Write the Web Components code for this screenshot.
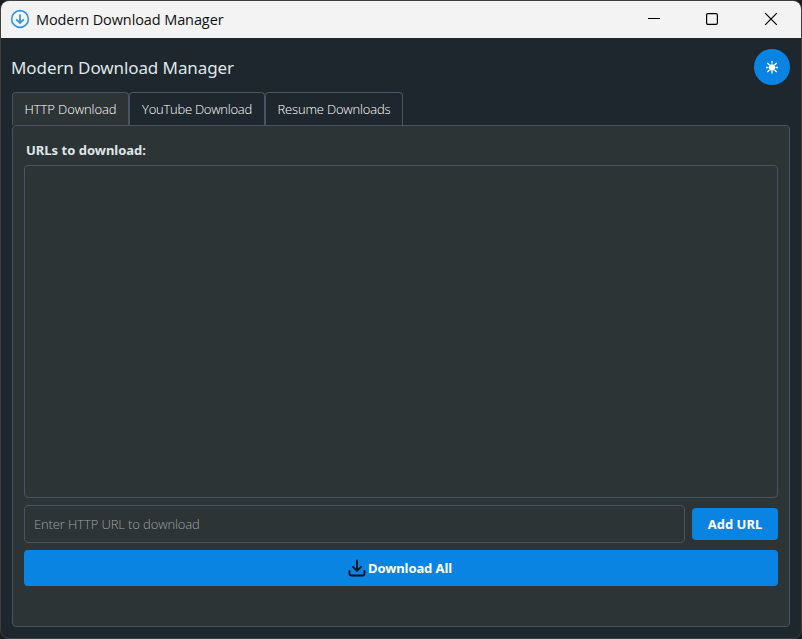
<!DOCTYPE html>
<html lang="en">
<head>
<meta charset="utf-8">
<title>Modern Download Manager</title>
<style>
html, body { margin: 0; height: 100%; background: #1c1c1c; overflow: hidden; }
body { font-family: "Noto Sans", "Open Sans", sans-serif; }
</style>
</head>
<body>
<app-window></app-window>
<script>
function define(name, markup) {
  const template = document.createElement('template');
  template.innerHTML = markup;
  customElements.define(name, class extends HTMLElement {
    constructor() {
      super();
      this.attachShadow({ mode: 'open' }).append(template.content.cloneNode(true));
    }
  });
}

define('title-bar', `
<style>
:host { display: flex; align-items: center; height: 37px; flex: none; background: #f3f3f3; color: #111; box-sizing: border-box; padding: 0 0 1px 9px; }
svg { display: block; flex: none; }
.name { flex: 1; margin-left: 6px; padding-top: 2px; font-family: "Open Sans", "Noto Sans", sans-serif; font-size: 14.5px; line-height: 20px; letter-spacing: -0.1px; white-space: nowrap; }
.controls { display: flex; align-items: center; gap: 40px; margin-right: 21px; }
.controls svg:not(:last-child) { position: relative; left: -1px; }
</style>
<svg width="20" height="20" viewBox="0 0 20 20" fill="none" stroke="#3498db"><circle cx="10" cy="10" r="8.4" stroke-width="1.6"/><path d="M10 5.5V14M6.2 10.3L10 14L13.8 10.3" stroke-width="1.8"/></svg>
<span class="name"><slot></slot></span>
<div class="controls">
<svg width="18" height="18" viewBox="0 0 18 18" stroke="#000"><path d="M3 8.5H15"/></svg>
<svg width="18" height="18" viewBox="0 0 18 18" fill="none" stroke="#000" stroke-width="1.2"><rect x="3.6" y="3.6" width="10.8" height="10.8" rx="1.3"/></svg>
<svg width="18" height="18" viewBox="0 0 18 18" stroke="#000" stroke-width="1.2"><path d="M3.2 3.2L14.8 14.8M14.8 3.2L3.2 14.8"/></svg>
</div>`);

define('theme-toggle', `
<style>
:host { display: grid; place-items: center; width: 36px; height: 36px; border-radius: 50%; background: #0984e3; }
svg { display: block; }
</style>
<svg width="14" height="14" viewBox="0 0 14 14" stroke="#fff" stroke-width="1.3"><circle cx="7" cy="7.5" r="2.5" fill="#fff"/><path d="M7 1V3.5M7 11V13.5M1 7.5H3.5M10.5 7.5H13M2.3 3L4.5 5M9.5 10L11.7 12M11.7 3L9.5 5M4.5 10L2.3 12"/></svg>`);

define('tab-item', `
<style>
:host { display: flex; align-items: center; justify-content: center; box-sizing: border-box; height: 33px; border: 1px solid #485460; border-bottom: 0; border-radius: 4px 4px 0 0; background: #1e272e; color: #fff; font-family: "Open Sans", "Noto Sans", sans-serif; font-size: 13px; font-weight: 300; white-space: nowrap; letter-spacing: var(--track, 0); }
:host([selected]) { background: #2d3436; }
</style>
<slot></slot>`);

define('url-list', `
<style>
:host { display: block; box-sizing: border-box; height: 333px; border: 1px solid #485460; border-radius: 4px; }
</style>
<slot></slot>`);

define('url-field', `
<style>
:host { display: flex; align-items: center; box-sizing: border-box; flex: 1; height: 38px; padding: 0 9px; border: 1px solid #485460; border-radius: 4px; color: #9da2a3; font-family: "Open Sans", "Noto Sans", sans-serif; font-size: 13px; font-weight: 300; white-space: nowrap; letter-spacing: -.12px; }
</style>
<slot></slot>`);

define('action-button', `
<style>
:host { display: flex; align-items: center; justify-content: center; gap: 2px; border-radius: 4px; background: #0984e3; color: #fff; font-size: 13px; font-weight: 700; white-space: nowrap; letter-spacing: var(--track, 0); }
::slotted(svg) { display: block; }
</style>
<slot name="icon"></slot><span><slot></slot></span>`);

define('app-window', `
<style>
:host { display: flex; flex-direction: column; box-sizing: border-box; width: 802px; height: 639px; border: 1px solid #403e3e; border-radius: 9px; overflow: hidden; background: #1e272e; color: #dfe6e9; }
header { display: flex; align-items: center; justify-content: space-between; height: 36px; margin: 11px 11px 7px 10px; }
h1 { margin: 0; padding-top: 2px; font-size: 17px; line-height: 24px; font-weight: 400; letter-spacing: -.09px; white-space: nowrap; }
nav { display: flex; margin-left: 11px; }
nav tab-item:nth-child(1) { width: 117px; --track: -.08px; }
nav tab-item:nth-child(2) { width: 136px; --track: -.25px; }
nav tab-item:nth-child(3) { width: 138px; --track: -.18px; }
main { box-sizing: border-box; height: 502px; margin: 0 11px; border: 1px solid #485460; border-radius: 4px; background: #2d3436; padding: 14px 11px 0; }
.label { font-size: 13px; font-weight: 700; line-height: 20px; margin: 0 0 5px 2px; }
.row { display: flex; align-items: center; gap: 7px; margin: 7px 0; }
.add { width: 86px; height: 32px; }
.all { height: 36px; padding-right: 2px; --track: -.1px; }
</style>
<title-bar>Modern Download Manager</title-bar>
<header><h1>Modern Download Manager</h1><theme-toggle></theme-toggle></header>
<nav><tab-item selected>HTTP Download</tab-item><tab-item>YouTube Download</tab-item><tab-item>Resume Downloads</tab-item></nav>
<main>
<div class="label">URLs to download:</div>
<url-list></url-list>
<div class="row"><url-field>Enter HTTP URL to download</url-field><action-button class="add">Add URL</action-button></div>
<action-button class="all"><svg slot="icon" width="18" height="18" viewBox="0 0 18 18" fill="none" stroke="#0c1117" stroke-width="1.8" stroke-linecap="round" stroke-linejoin="round"><path d="M9 1.5V11.5M5 7.8L9 11.8L13 7.8M1.5 12V14.5Q1.5 16.5 3.5 16.5H14.5Q16.5 16.5 16.5 14.5V12"/></svg>Download All</action-button>
</main>`);
</script>
</body>
</html>
